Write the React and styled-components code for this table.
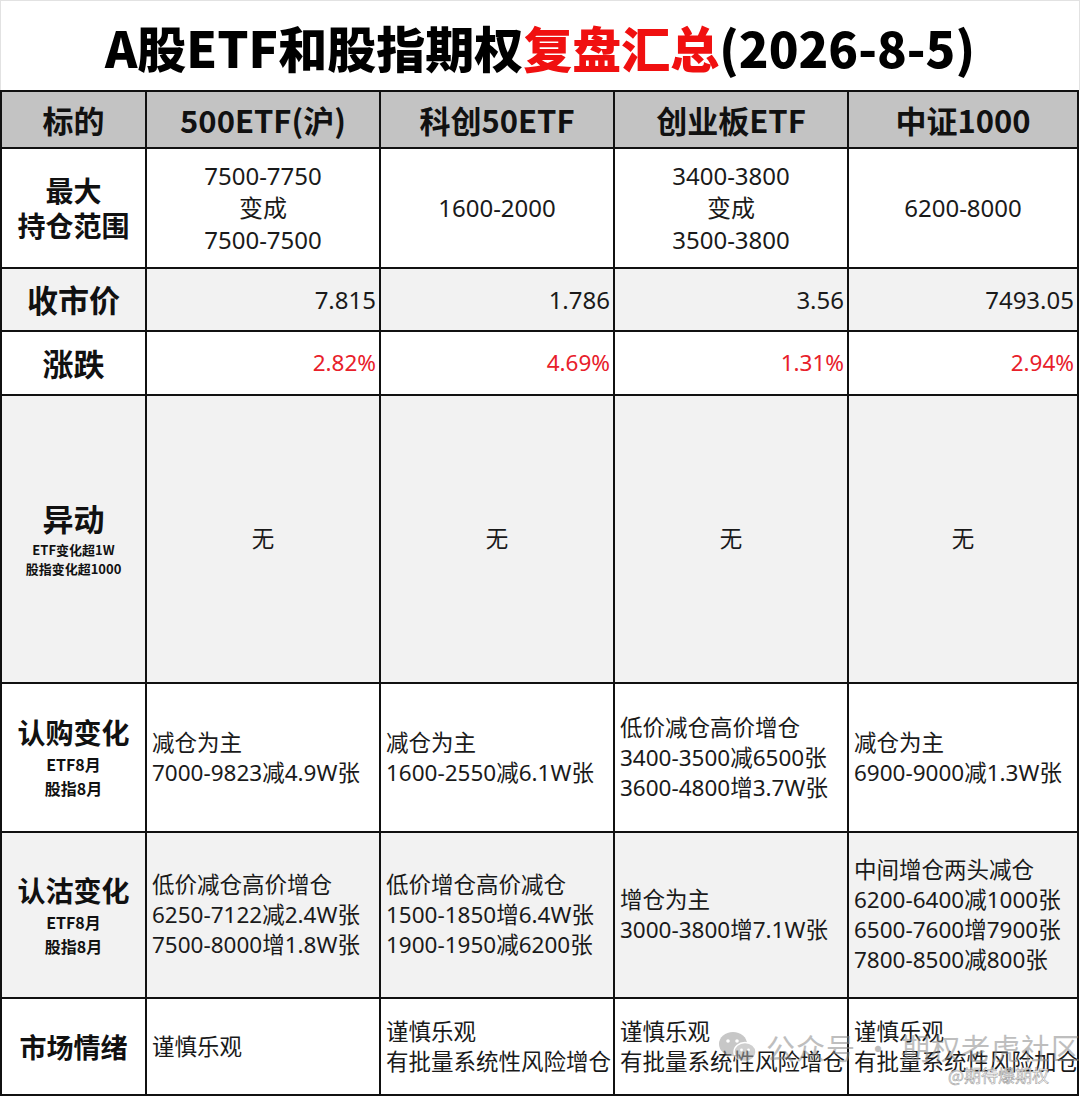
import React from 'react'
import styled, { createGlobalStyle } from 'styled-components'

const GlobalStyle = createGlobalStyle`
    body {
        margin: 0;
        background: #ffffff;
        font-family: "Noto Sans", "Noto Sans CJK SC", sans-serif;
        color: #111;
    }
`

const columns = ['500ETF(沪)', '科创50ETF', '创业板ETF', '中证1000']

const rows = [
    {
        label: ['最大', '持仓范围'],
        size: 28,
        height: 120,
        align: 'center',
        big: true,
        cells: [
            ['7500-7750', '变成', '7500-7500'],
            ['1600-2000'],
            ['3400-3800', '变成', '3500-3800'],
            ['6200-8000'],
        ],
    },
    {
        label: ['收市价'],
        size: 31,
        height: 63,
        shaded: true,
        align: 'right',
        big: true,
        cells: [['7.815'], ['1.786'], ['3.56'], ['7493.05']],
    },
    {
        label: ['涨跌'],
        size: 31,
        height: 64,
        align: 'right',
        red: true,
        cells: [['2.82%'], ['4.69%'], ['1.31%'], ['2.94%']],
    },
    {
        label: ['异动'],
        size: 31,
        height: 288,
        shaded: true,
        align: 'center',
        notes: ['ETF变化超1W', '股指变化超1000'],
        noteSize: 13,
        cells: [['无'], ['无'], ['无'], ['无']],
    },
    {
        label: ['认购变化'],
        size: 28,
        height: 149,
        align: 'left',
        notes: ['ETF8月', '股指8月'],
        noteSize: 16,
        cells: [
            ['减仓为主', '7000-9823减4.9W张'],
            ['减仓为主', '1600-2550减6.1W张'],
            ['低价减仓高价增仓', '3400-3500减6500张', '3600-4800增3.7W张'],
            ['减仓为主', '6900-9000减1.3W张'],
        ],
    },
    {
        label: ['认沽变化'],
        size: 28,
        height: 166,
        shaded: true,
        align: 'left',
        notes: ['ETF8月', '股指8月'],
        noteSize: 16,
        cells: [
            ['低价减仓高价增仓', '6250-7122减2.4W张', '7500-8000增1.8W张'],
            ['低价增仓高价减仓', '1500-1850增6.4W张', '1900-1950减6200张'],
            ['增仓为主', '3000-3800增7.1W张'],
            ['中间增仓两头减仓', '6200-6400减1000张', '6500-7600增7900张', '7800-8500减800张'],
        ],
    },
    {
        label: ['市场情绪'],
        size: 27,
        height: 97,
        align: 'left',
        cells: [
            ['谨慎乐观'],
            ['谨慎乐观', '有批量系统性风险增仓'],
            ['谨慎乐观', '有批量系统性风险增仓'],
            ['谨慎乐观', '有批量系统性风险加仓'],
        ],
    },
]

function App() {
    return (
        <Page>
            <GlobalStyle />
            <TitleBar>
                <Title>
                    A股ETF和股指期权<Red>复盘汇总</Red>(2026-8-5)
                </Title>
            </TitleBar>
            <Table>
                <colgroup>
                    <col style={{ width: 145 }} />
                    <col style={{ width: 234 }} />
                    <col style={{ width: 234 }} />
                    <col style={{ width: 234 }} />
                    <col />
                </colgroup>
                <thead>
                    <tr>
                        <HeadCell>标的</HeadCell>
                        {columns.map((c) => (
                            <HeadCell key={c}>{c}</HeadCell>
                        ))}
                    </tr>
                </thead>
                <tbody>
                    {rows.map((row) => (
                        <Row key={row.label.join('')} $shaded={row.shaded} $height={row.height}>
                            <LabelCell>
                                <Label $size={row.size}>
                                    {row.label.map((l) => (
                                        <div key={l}>{l}</div>
                                    ))}
                                </Label>
                                {row.notes && (
                                    <Notes $size={row.noteSize}>
                                        {row.notes.map((n) => (
                                            <div key={n}>{n}</div>
                                        ))}
                                    </Notes>
                                )}
                            </LabelCell>
                            {row.cells.map((lines, i) => (
                                <DataCell key={i} $align={row.align} $red={row.red} $big={row.big}>
                                    {lines.map((line, j) => (
                                        <div key={j}>{line}</div>
                                    ))}
                                </DataCell>
                            ))}
                        </Row>
                    ))}
                </tbody>
            </Table>
            <Watermark>
                <WeChat viewBox="0 0 40 34">
                    <ellipse cx="15" cy="14" rx="14" ry="12" fill="#9a9a9a" />
                    <ellipse cx="27" cy="22" rx="11" ry="9.5" fill="#a8a8a8" stroke="#fff" strokeWidth="1.5" />
                    <circle cx="10" cy="11" r="1.8" fill="#fff" />
                    <circle cx="19" cy="11" r="1.8" fill="#fff" />
                    <circle cx="23.5" cy="20" r="1.4" fill="#fff" />
                    <circle cx="30.5" cy="20" r="1.4" fill="#fff" />
                </WeChat>
                <MarkText>公众号 · 期权老虎社区</MarkText>
            </Watermark>
            <Handle>@期待爆期权</Handle>
        </Page>
    )
}

const Page = styled.div`
    position: relative;
    width: 1080px;
    height: 1097px;
    overflow: hidden;
    background: #ffffff;
`

const TitleBar = styled.div`
    height: 90px;
    box-sizing: border-box;
    border: 1px solid #e2e2e2;
    border-bottom: none;
    display: flex;
    align-items: center;
    justify-content: center;
`

const Title = styled.h1`
    margin: 0;
    font-family: "Noto Sans CJK SC", sans-serif;
    font-size: 49px;
    font-weight: 900;
    color: #000;
    white-space: nowrap;
    padding-top: 2px;
`

const Red = styled.span`
    color: #f01010;
`

const Table = styled.table`
    width: 1079px;
    border-collapse: collapse;
    table-layout: fixed;
    border: 2px solid #111;
`

const HeadCell = styled.th`
    height: 55px;
    background: #c3c3c3;
    border: 2px solid #111;
    font-family: "Noto Sans CJK SC", sans-serif;
    font-size: 31px;
    font-weight: 700;
    color: #111;
    text-align: center;
    padding: 0;
`

const Row = styled.tr`
    height: ${(p) => p.$height}px;
    background: ${(p) => (p.$shaded ? '#f2f2f2' : '#ffffff')};
`

const LabelCell = styled.td`
    border: 2px solid #111;
    text-align: center;
    vertical-align: middle;
    padding: 0;
    font-family: "Noto Sans CJK SC", sans-serif;
    font-weight: 700;
    color: #111;
`

const Label = styled.div`
    font-size: ${(p) => p.$size}px;
    line-height: 1.25;
`

const Notes = styled.div`
    font-size: ${(p) => p.$size}px;
    line-height: 1.5;
    margin-top: 2px;
`

const DataCell = styled.td`
    border: 2px solid #111;
    vertical-align: middle;
    text-align: ${(p) => p.$align};
    padding: ${(p) => (p.$align === 'left' ? '0 4px 0 5px' : p.$align === 'right' ? '0 3px 0 0' : '0')};
    font-size: ${(p) => (p.$big ? 24 : 22.5)}px;
    line-height: ${(p) => (p.$big ? 32 : 30)}px;
    color: ${(p) => (p.$red ? '#e8202a' : '#1a1a1a')};
    white-space: nowrap;
`

const Watermark = styled.div`
    position: absolute;
    left: 718px;
    top: 1026px;
    display: flex;
    align-items: center;
    gap: 8px;
    opacity: 0.55;
    white-space: nowrap;
    pointer-events: none;
`

const WeChat = styled.svg`
    width: 40px;
    height: 34px;
    flex-shrink: 0;
`

const MarkText = styled.span`
    font-family: "Noto Sans CJK SC", sans-serif;
    font-size: 29px;
    color: #8a8a8a;
    letter-spacing: 1px;
`

const Handle = styled.div`
    position: absolute;
    left: 948px;
    top: 1062px;
    font-family: "Noto Sans CJK SC", sans-serif;
    font-size: 17px;
    color: #ffffff;
    -webkit-text-stroke: 0.6px #999;
    white-space: nowrap;
    opacity: 0.9;
    pointer-events: none;
`

export default App
